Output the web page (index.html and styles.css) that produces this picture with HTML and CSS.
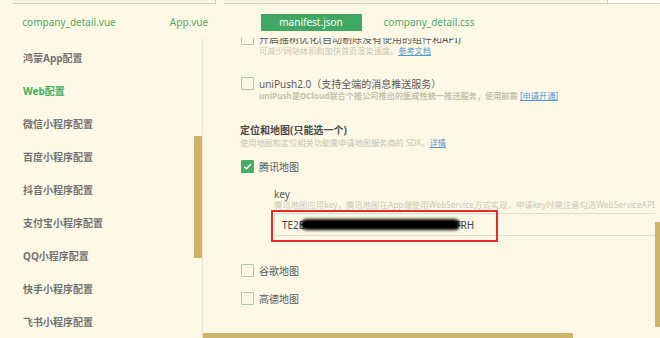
FILE: index.html
```html
<!DOCTYPE html>
<html lang="zh-CN">
  <head>
    <meta charset="UTF-8" />
    <meta name="viewport" content="width=device-width, initial-scale=1.0" />
    <title>manifest.json</title>
    <link rel="stylesheet" href="styles.css">
  </head>
  <body>
    <div class="topstrip">
      <span class="pane pane-a"></span>
      <span class="pane pane-b"></span>
      <span class="pane pane-c"></span>
    </div>

    <div class="tabs">
      <div class="tab">company_detail.vue</div>
      <div class="tab">App.vue</div>
      <div class="tab"><span class="tab-active">manifest.json</span></div>
      <div class="tab">company_detail.css</div>
    </div>

    <div class="layout">
      <aside class="side">
        <ul class="nav">
          <li>鸿蒙App配置</li>
          <li class="current">Web配置</li>
          <li>微信小程序配置</li>
          <li>百度小程序配置</li>
          <li>抖音小程序配置</li>
          <li>支付宝小程序配置</li>
          <li>QQ小程序配置</li>
          <li>快手小程序配置</li>
          <li>飞书小程序配置</li>
        </ul>
        <div class="side-track"><div class="side-thumb"></div></div>
      </aside>

      <main class="main">
        <div class="main-row">
          <div class="content">
            <div class="option first">
              <div class="check-row">
                <span class="box"></span>
                <span class="label">开启摇树优化(自动剔除没有使用的组件和API)</span>
              </div>
              <div class="desc">可减少网站体积和加快首页渲染速度。<a class="link">参考文档</a></div>
            </div>

            <div class="option">
              <div class="check-row">
                <span class="box"></span>
                <span class="label">uniPush2.0（支持全端的消息推送服务）</span>
              </div>
              <div class="desc strong">uniPush是DCloud联合个推公司推出的集成性统一推送服务，使用前需 <a class="link">[申请开通]</a></div>
            </div>

            <h3 class="section-title">定位和地图(只能选一个)</h3>
            <div class="section-desc">使用地图和定位相关功能需申请地图服务商的 SDK。<a class="link">详情</a></div>

            <div class="check-row map-first">
              <span class="box checked">
                <svg width="9" height="9" viewBox="0 0 10 10"><path d="M1.5 5.2 L4 7.6 L8.6 2.6" fill="none" stroke="#fff" stroke-width="1.6"/></svg>
              </span>
              <span class="label">腾讯地图</span>
            </div>

            <div class="key">
              <div class="key-label">key</div>
              <div class="key-desc">腾讯地图应用key，腾讯地图在App端使用WebService方式实现，申请key时需注意勾选WebServiceAPI</div>
              <div class="key-input"><span>TE2B</span><span class="hidden-part"></span><span>FRH</span></div>
              <div class="redact"></div>
              <div class="mark"></div>
            </div>

            <div class="check-row map-second">
              <span class="box"></span>
              <span class="label">谷歌地图</span>
            </div>
            <div class="check-row map-third">
              <span class="box"></span>
              <span class="label">高德地图</span>
            </div>
          </div>
          <div class="main-track"><div class="main-thumb"></div></div>
        </div>
        <div class="hbar"><div class="hthumb"></div></div>
      </main>
    </div>
  </body>
</html>
```

FILE: styles.css
```css
body {
  margin: 0;
  width: 660px;
  height: 338px;
  overflow: hidden;
  background-color: #fdf8e6;
  font-family: "Noto Sans", "Noto Sans CJK SC", sans-serif;
  font-size: 10px;
  color: #555;
}
.topstrip {
  display: flex;
  height: 4px;
}
.pane {
  display: block;
  height: 3px;
  border-bottom: 1px solid #d9d3bb;
  background-color: #f8f4e4;
}
.pane-a {
  width: 202px;
  margin-left: 13px;
  border-right: 1px solid #d9d3bb;
}
.pane-b {
  width: 383px;
  margin-left: 8px;
  border-right: 1px solid #d9d3bb;
}
.pane-c {
  flex: 1;
  background-color: #fffdf6;
}
.tabs {
  display: flex;
  height: 34px;
  box-sizing: border-box;
  padding: 10px 0 0 9px;
}
.tab {
  width: 120px;
  text-align: center;
  color: #4fa96a;
  line-height: 17px;
}
.tab-active {
  display: inline-block;
  width: 101px;
  margin-left: 4px;
  background-color: #41a862;
  color: #fff;
}
.layout {
  display: flex;
  height: 300px;
}
.side {
  display: flex;
  width: 202px;
  flex-shrink: 0;
}
.nav {
  list-style: none;
  margin: 0;
  padding: 4px 0 0 23px;
  width: 171px;
}
.nav li {
  line-height: 33px;
  font-weight: bold;
  color: #727272;
}
.nav li.current {
  color: #3fae62;
}
.side-track {
  width: 8px;
}
.side-thumb {
  margin-top: 98px;
  height: 122px;
  background-color: #cfb46b;
}
.main {
  flex: 1;
  border-left: 1px solid #ede5c8;
  display: flex;
  flex-direction: column;
}
.main-row {
  display: flex;
  height: 295px;
}
.content {
  flex: 1;
  overflow: hidden;
  padding-left: 37px;
}
.main-track {
  width: 5px;
}
.main-thumb {
  margin-top: 184px;
  height: 105px;
  background-color: #cfb46b;
}
.hbar {
  height: 5px;
}
.hthumb {
  width: 370px;
  height: 5px;
  background-color: #cfb46b;
}
.check-row {
  display: flex;
  align-items: center;
  height: 14px;
  white-space: nowrap;
}
.box {
  width: 13px;
  height: 13px;
  box-sizing: border-box;
  border: 1.5px solid #9dcfac;
  border-radius: 1px;
  margin-left: 1px;
  margin-right: 5px;
  flex-shrink: 0;
  display: flex;
  align-items: center;
  justify-content: center;
}
.box.checked {
  background-color: #48ad66;
  border-color: #48ad66;
}
.label {
  color: #5a5a5a;
}
.option {
  margin-bottom: 19px;
}
.option.first {
  margin-top: -7px;
}
.desc {
  padding-left: 19px;
  font-size: 8.2px;
  line-height: 12px;
  color: #c9c3b1;
  white-space: nowrap;
}
.desc.strong {
  font-weight: bold;
  color: #c7c1ad;
}
.link {
  color: #4f97d6;
  text-decoration: underline;
  font-weight: normal;
}
.section-title {
  margin: 21px 0 0;
  font-size: 10px;
  line-height: 14px;
  font-weight: bold;
  color: #4a4a4a;
}
.section-desc {
  font-size: 8.2px;
  line-height: 12px;
  color: #c9c3b1;
}
.map-first {
  margin-top: 10px;
}
.key {
  position: relative;
  margin: 16px 0 0 34px;
}
.key-label {
  line-height: 10px;
  color: #5a5a5a;
}
.key-desc {
  margin-top: 1px;
  font-size: 8.4px;
  line-height: 10px;
  color: #cdc7b5;
  white-space: nowrap;
}
.key-input {
  margin-top: 3px;
  height: 23px;
  box-sizing: border-box;
  border: 1px solid #e3ddc6;
  border-right: none;
  padding-left: 7px;
  display: flex;
  align-items: center;
  color: #444;
}
.hidden-part {
  display: inline-block;
  width: 150px;
}
.redact {
  position: absolute;
  left: 27px;
  top: 30px;
  width: 159px;
  height: 11px;
  border-radius: 6px;
  background-color: #000;
  filter: blur(1.5px);
}
.mark {
  position: absolute;
  left: -3px;
  top: 21px;
  width: 227px;
  height: 32px;
  box-sizing: border-box;
  border: 2px solid #e22b2b;
}
.map-second {
  margin-top: 27px;
}
.map-third {
  margin-top: 14px;
}
```
